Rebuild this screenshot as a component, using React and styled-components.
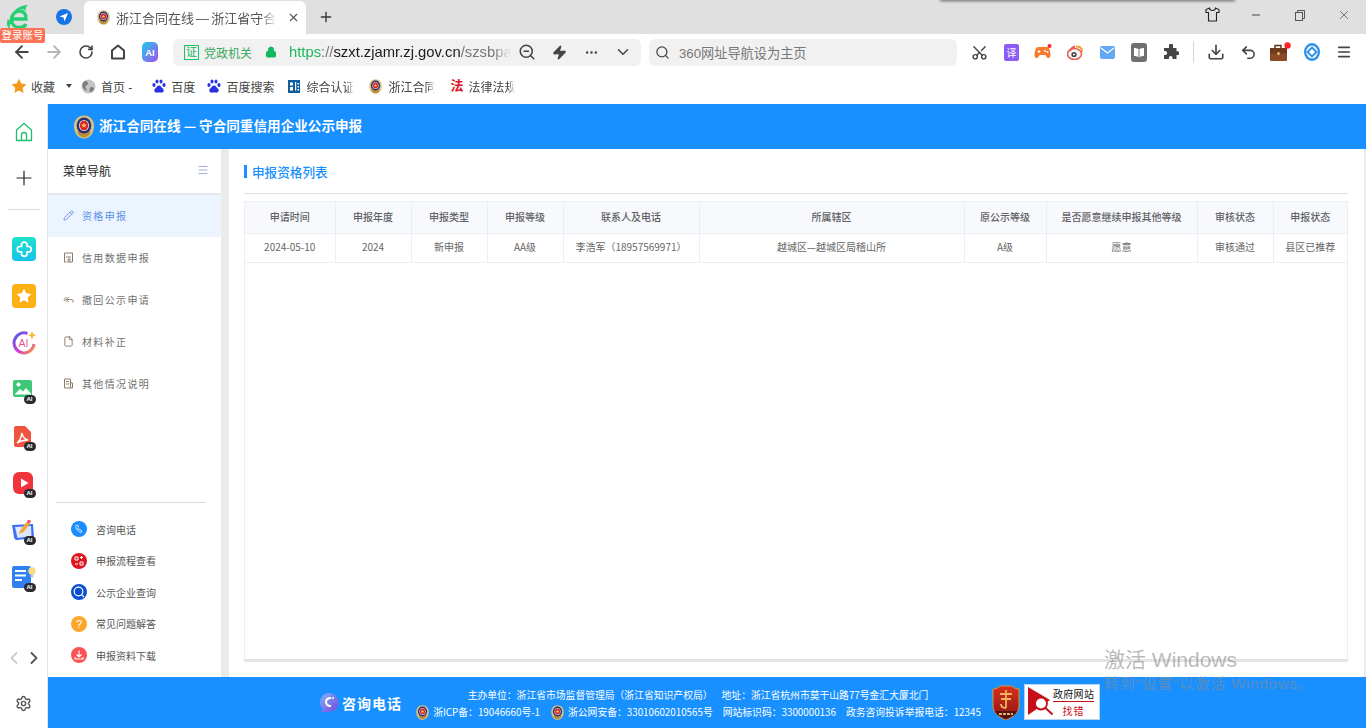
import React from 'react';
import styled, { createGlobalStyle } from 'styled-components';
import {
  ArrowLeft, ArrowRight, RotateCw, Search, Zap, MoreHorizontal, ChevronDown, X, Plus, Minus,
  Scissors, Download, Undo2, Menu, Settings, ChevronLeft, ChevronRight, Lock, Pencil, File,
  ZoomOut, ReplyAll,
} from 'lucide-react';

const blue = '#1890ff';
const cjk = '"Noto Sans CJK SC", "Noto Sans", sans-serif';

const GlobalStyle = createGlobalStyle`
  html, body { margin: 0; padding: 0; background: #fff; overflow: hidden; }
  * { box-sizing: border-box; }
  body { font-family: "Liberation Sans", ${cjk}; }
`;

const Page = styled.div`
  position: relative;
  width: 1366px;
  height: 728px;
  display: flex;
  flex-direction: column;
  overflow: hidden;
`;

/* browser chrome */
const TabStrip = styled.div`
  position: relative;
  height: 34px;
  background: #e0e0e0;
  display: flex;
  align-items: flex-end;
`;

const TabBrand = styled.div`
  width: 84px;
  height: 34px;
  display: flex;
  align-items: center;
  padding-left: 6px;
  gap: 24px;
`;

const LoginBadge = styled.span`
  position: absolute;
  left: 0;
  top: 28px;
  width: 45px;
  height: 15px;
  background: #fb7355;
  border-radius: 2px;
  color: #fff;
  font-size: 10.5px;
  line-height: 14px;
  text-align: center;
  white-space: nowrap;
  z-index: 3;
`;

const ActiveTab = styled.div`
  width: 222px;
  height: 33px;
  background: #fff;
  border-radius: 6px 6px 0 0;
  display: flex;
  align-items: center;
  padding-left: 12px;
  gap: 5px;
  color: #555;
  font-size: 13px;
  word-spacing: -1.5px;
`;

const FadeText = styled.span`
  width: ${({ w }) => w}px;
  overflow: hidden;
  white-space: nowrap;
  flex-shrink: 0;
  -webkit-mask-image: linear-gradient(to right, #000 ${({ from }) => from || 85}%, transparent);
  mask-image: linear-gradient(to right, #000 ${({ from }) => from || 85}%, transparent);
`;

const NewTab = styled.div`
  width: 40px;
  height: 34px;
  display: flex;
  align-items: center;
  justify-content: center;
  color: #333;
`;

const WindowButtons = styled.div`
  margin-left: auto;
  height: 29px;
  align-self: flex-start;
  display: flex;
  align-items: center;
`;

const WinButton = styled.div`
  width: 44px;
  display: flex;
  justify-content: center;
  color: #444;
`;

const TopShadow = styled.div`
  position: absolute;
  left: 940px;
  top: -2px;
  width: 295px;
  height: 2px;
  box-shadow: 0 1px 3px rgba(0, 0, 0, 0.65);
`;

const Toolbar = styled.div`
  height: 36px;
  background: #fff;
  display: flex;
  align-items: center;
  padding-left: 6px;
`;

const Slot = styled.div`
  width: ${({ w }) => w || 32}px;
  height: 28px;
  flex-shrink: 0;
  display: flex;
  align-items: center;
  justify-content: center;
  color: ${({ dim }) => (dim ? '#b4b4b4' : '#444')};
`;

const AddressBar = styled.div`
  width: 468px;
  height: 27px;
  margin-left: 7px;
  background: #f1f1f1;
  border-radius: 6px;
  display: flex;
  align-items: center;
  padding-left: 11px;
`;

const CertMark = styled.span`
  width: 15px;
  height: 15px;
  border: 1px solid #19c26b;
  color: #19b562;
  font-size: 11px;
  line-height: 12px;
  text-align: center;
`;

const CertText = styled.span`
  margin-left: 5px;
  width: 49px;
  color: #3aa860;
  font-size: 12px;
  white-space: nowrap;
`;

const LockWrap = styled.span`
  width: 36px;
  display: flex;
  justify-content: center;
  color: #12b85c;
`;

const Url = styled(FadeText)`
  font-size: 14.8px;
  color: #1b1b1b;
  b { font-weight: 400; color: #1fb760; }
  i { font-style: normal; color: #777; }
`;

const SearchBar = styled.div`
  width: 308px;
  height: 27px;
  margin: 0 6px 0 8px;
  background: #f1f1f1;
  border-radius: 6px;
  display: flex;
  align-items: center;
  gap: 9px;
  padding-left: 5px;
  color: #777;
  font-size: 13.2px;
`;

const SlotDivider = styled.span`
  width: 1px;
  height: 22px;
  margin: 0 6px;
  background: #d8d8d8;
  flex-shrink: 0;
`;

const Bookmarks = styled.div`
  height: 34px;
  background: #fff;
  display: flex;
  align-items: center;
  padding: 0 0 2px 11px;
  font-size: 12px;
  color: #444;
`;

const Mark = styled.span`
  display: flex;
  align-items: center;
  gap: ${({ gap }) => gap ?? 4}px;
  margin-left: ${({ ml }) => ml || 0}px;
  white-space: nowrap;
`;

const Caret = styled.span`
  width: 0;
  height: 0;
  margin-left: 11px;
  border: 3.5px solid transparent;
  border-top: 4px solid #444;
  border-bottom: 0;
`;

const LawGlyph = styled.span`
  width: 12px;
  color: #d8121f;
  font-size: 13px;
  font-weight: 700;
  line-height: 14px;
  text-align: center;
`;

/* site */
const Body = styled.div`
  flex: 1;
  min-height: 0;
  display: flex;
`;

const Rail = styled.nav`
  width: 48px;
  flex-shrink: 0;
  border-right: 1px solid #e4e4e4;
  display: flex;
  flex-direction: column;
  align-items: center;
  padding-top: 18px;
`;

const RailRule = styled.span`
  width: 32px;
  height: 1px;
  background: #dcdcdc;
  margin: 19px 0 27px;
`;

const RailApps = styled.div`
  display: flex;
  flex-direction: column;
  gap: 23px;
`;

const RailApp = styled.div`
  position: relative;
  width: 24px;
  height: 24px;
`;

const AiTag = styled.span`
  position: absolute;
  right: 0;
  bottom: -2px;
  width: 12px;
  height: 9px;
  border-radius: 5px;
  background: #2a2a2e;
  color: #fff;
  font-size: 6px;
  font-weight: 700;
  line-height: 9px;
  text-align: center;
`;

const RailArrows = styled.div`
  margin-top: 58px;
  display: flex;
  gap: 0;
`;

const RailBottom = styled.div`
  margin-top: 27px;
  color: #555;
  display: flex;
`;

const Site = styled.div`
  flex: 1;
  min-width: 0;
  display: flex;
  flex-direction: column;
`;

const SiteHeader = styled.header`
  height: 45px;
  flex-shrink: 0;
  background: ${blue};
  display: flex;
  align-items: center;
  padding: 0 0 0 24px;
  gap: 3px;
  color: #fff;
  font-size: 13.6px;
  font-weight: 700;
  font-family: ${cjk};
`;

const SiteTitle = styled.span`
  padding-bottom: 4px;
`;

const SiteMain = styled.div`
  flex: 1;
  min-height: 0;
  display: flex;
  background: #ebebeb;
  padding-right: 2px;
`;

const Sidebar = styled.aside`
  width: 173px;
  flex-shrink: 0;
  background: #fff;
  margin-right: 8px;
  display: flex;
  flex-direction: column;
  font-family: ${cjk};
`;

const SideTitle = styled.div`
  height: 46px;
  flex-shrink: 0;
  border-bottom: 2px solid #e3e8ee;
  display: flex;
  align-items: center;
  justify-content: space-between;
  padding: 0 12px 2px 15px;
  font-size: 12px;
  color: #222;
`;

const SideItem = styled.div`
  height: 42px;
  display: flex;
  align-items: center;
  gap: 8px;
  padding: 0 0 1px 15px;
  font-size: 10px;
  letter-spacing: 1.35px;
  background: ${({ active }) => (active ? '#ecf4ff' : 'transparent')};
  color: ${({ active }) => (active ? '#5a92e8' : '#707070')};
`;

const SideLinks = styled.div`
  margin: auto 15px 0 8px;
  padding: 11px 0 6px;
  border-top: 1px solid #dcdcdc;
`;

const SideLink = styled.div`
  height: 31.5px;
  display: flex;
  align-items: center;
  gap: 9px;
  padding-left: 15px;
  font-size: 10px;
  color: #555;
`;

const Content = styled.main`
  flex: 1;
  min-width: 0;
  background: #fff;
  padding: 0 16px 15px 15px;
  display: flex;
  flex-direction: column;
  font-family: ${cjk};
`;

const ListTitle = styled.h2`
  height: 45px;
  flex-shrink: 0;
  margin: 0 0 7px;
  border-bottom: 1px solid #dfdfdf;
  display: flex;
  align-items: center;
  gap: 5px;
  color: ${blue};
  font-size: 12.6px;
  font-weight: 500;
  &:before {
    content: '';
    width: 3px;
    height: 13px;
    background: ${blue};
  }
`;

const TableBox = styled.div`
  flex: 1;
  min-height: 0;
  border: 1px solid #ebeef5;
  border-bottom: 3px solid #e4e4e4;
`;

const Table = styled.table`
  width: 100%;
  table-layout: fixed;
  border-collapse: collapse;
  font-size: 10px;
  text-align: center;
`;

const Th = styled.th`
  height: 31px;
  padding: 0 0 2px;
  background: #f8f9fc;
  border: 1px solid #ebeef5;
  border-top: 0;
  color: #606266;
  font-weight: 500;
  &:first-child { border-left: 0; }
  &:last-child { border-right: 0; }
`;

const Td = styled.td`
  height: 29px;
  padding: 0 0 2px;
  border: 1px solid #ebeef5;
  color: #666;
  &:first-child { border-left: 0; }
  &:last-child { border-right: 0; }
`;

const SiteFooter = styled.footer`
  height: 51px;
  flex-shrink: 0;
  background: ${blue};
  display: flex;
  align-items: center;
  padding-left: 271px;
  color: #fff;
  font-size: 9.8px;
  font-family: ${cjk};
`;

const Consult = styled.div`
  width: 97px;
  flex-shrink: 0;
  display: flex;
  align-items: center;
  gap: 3px;
  font-size: 14px;
  font-weight: 700;
  letter-spacing: 1px;
`;

const FootLines = styled.div`
  width: 564px;
  flex-shrink: 0;
  display: flex;
  flex-direction: column;
  align-items: center;
  gap: 2px;
  margin-top: 2px;
`;

const FootLine = styled.div`
  height: 15px;
  display: flex;
  align-items: center;
  gap: ${({ gap }) => gap || 0}px;
  white-space: nowrap;
`;

const FootItem = styled.span`
  display: flex;
  align-items: center;
  gap: 3px;
`;

const TaxBadge = styled.div`
  margin-left: 11px;
  width: 30px;
  height: 37px;
  flex-shrink: 0;
`;

const ErrorBox = styled.div`
  width: 76px;
  height: 36px;
  margin: 0 0 2px 3px;
  flex-shrink: 0;
  background: #fff;
  border: 1px solid #b5d5f5;
  display: flex;
  align-items: center;
  padding-left: 3px;
  color: #111;
`;

const ErrorText = styled.div`
  display: flex;
  flex-direction: column;
  align-items: center;
  font-size: 10px;
  line-height: 13px;
  span { padding-bottom: 1px; border-bottom: 1px solid #c8101a; letter-spacing: 0.3px; white-space: nowrap; }
  em { font-style: normal; color: #c8101a; letter-spacing: 1px; margin-top: 2px; }
`;

const Watermark = styled.div`
  position: absolute;
  left: 1104px;
  top: 647px;
  color: rgba(140, 140, 140, 0.6);
  white-space: nowrap;
  pointer-events: none;
  font-family: "Liberation Sans", ${cjk};
  h4 { margin: 0; font-weight: 400; font-size: 21px; line-height: 25px; }
  p { margin: 0; font-size: 15px; line-height: 23px; letter-spacing: 0.8px; }
`;

const Emblem = ({ size = 18 }) => (
  <svg width={size} height={size} viewBox="0 0 24 24" style={{ flexShrink: 0 }}>
    <path d="M12 .5c6 0 10 4.500 10 10.500 0 7-4 12.500-10 12.500S2 18 2 11C2 5 6 .5 12 .5z" fill="#d8c184" />
    <path d="M5 17c2 4 4.500 5.500 7 5.500s5-1.500 7-5.500l-7-3z" fill="#b98f3c" />
    <ellipse cx="12" cy="10.500" rx="7.300" ry="8" fill="#2a2f74" />
    <ellipse cx="12" cy="10.500" rx="5" ry="5.600" fill="#e9e3d2" />
    <ellipse cx="12" cy="10.500" rx="4.200" ry="4.800" fill="#d8232a" />
    <path d="M12 7.500l.9 2h2l-1.600 1.300.6 2-1.900-1.200-1.900 1.200.6-2L9.100 9.500h2z" fill="#f6cf57" />
  </svg>
);

const Paw = () => (
  <svg width="14" height="15" viewBox="0 0 14 15" fill="#2932e1">
    <ellipse cx="2" cy="6" rx="1.600" ry="2" />
    <ellipse cx="5" cy="2.600" rx="1.500" ry="2" />
    <ellipse cx="9" cy="2.600" rx="1.500" ry="2" />
    <ellipse cx="12" cy="6" rx="1.600" ry="2" />
    <path d="M7 6.500c-2 0-2.400 2-4 3.200C1.500 11 2.500 14 5 13.600c1.500-.2 2.500-.2 4 0 2.500.4 3.500-2.600 2-3.900C9.400 8.500 9 6.500 7 6.500z" />
  </svg>
);

const GovBox = () => (
  <svg width="12" height="13" viewBox="0 0 12 13">
    <rect width="12" height="13" fill="#0f5f9e" />
    <path d="M2 2.500h3v3H2zM2 7h3v3.500H2zM7 2h1.200v8.500H7zM9.500 3H11v1.500H9.500zM9.500 6H11v1.500H9.500zM9.500 9H11v1.500H9.500z" fill="#fff" />
  </svg>
);

const Globe = () => (
  <svg width="15" height="15" viewBox="0 0 15 15">
    <circle cx="7.500" cy="7.500" r="7" fill="#c4c4c4" />
    <path d="M4 2c2 0 3 1 3 2.500S5 6 4.500 7.500 6 10 6 12c-2-.5-4-2.500-4.500-4.500S2.500 2.500 4 2zM10 8c1.500 0 3 .5 3 1.500S11 13 9.500 13 8.500 8 10 8z" fill="#7d7d7d" />
  </svg>
);

const Star = () => (
  <svg width="16" height="16" viewBox="0 0 16 16" fill="#f59a1c">
    <path d="M8 .8l2.300 4.800 5.200.7-3.800 3.600.9 5.200L8 12.600 3.400 15.100l.9-5.200L.5 6.300l5.200-.7z" />
  </svg>
);

const BrowserLogo = () => (
  <svg width="26" height="27" viewBox="0 0 26 27">
    <path d="M6 15h14c.5-5-2.500-8-6.500-8S5.500 10.500 5.500 15.500s3.500 8 8 8c3 0 5.500-1.200 6.500-3.500" fill="none" stroke="#22cf72" strokeWidth="3.400" />
    <path d="M7 9C11 3 17 1 22 1c-2 1-3 3-2 6-3-3-8-2-13 2zM2 15c-2 4-1 8 2 10-1-3 0-5 2-6z" fill="#22cf72" />
  </svg>
);

const Compass = () => (
  <svg width="16" height="16" viewBox="0 0 16 16">
    <circle cx="8" cy="8" r="8" fill="#1673e6" />
    <path d="M12 4L8.600 12.500 7.500 8.500 3.500 7.400z" fill="#fff" />
  </svg>
);

const Shirt = () => (
  <svg width="15" height="15" viewBox="0 0 15 15" fill="none" stroke="#222" strokeWidth="1.100">
    <path d="M4.500 1L1 2.500v3h2.500V14h8V5.500H14v-3L10.500 1c0 1.500-1.300 2.500-3 2.500S4.500 2.500 4.500 1z" />
  </svg>
);

const Restore = () => (
  <svg width="12" height="12" viewBox="0 0 12 12" fill="none" stroke="#555">
    <rect x="1.500" y="3.500" width="7" height="8" />
    <path d="M3.500 3V1.500h7v8H9" />
  </svg>
);

const HomeOutline = ({ color = '#444', size = 16, width = 2 }) => (
  <svg width={size} height={size} viewBox="0 0 16 16" fill="none" stroke={color} strokeWidth={width} strokeLinejoin="round">
    <path d="M8 1.500L2 6.500v8h12v-8z" />
  </svg>
);

const RailHome = () => (
  <svg width="20" height="20" viewBox="0 0 20 20" fill="none" stroke="#1fbf6f" strokeWidth="1.300" strokeLinejoin="round">
    <path d="M10 1.500L2.500 8v10.500h15V8z" />
    <path d="M7.500 18.500V13a2.500 2.500 0 0 1 5 0v5.500" />
  </svg>
);

const AiChip = () => (
  <svg width="16" height="20" viewBox="0 0 16 20">
    <defs>
      <linearGradient id="aichip" x1="0" y1="0" x2="1" y2="1">
        <stop offset="0" stopColor="#19cdf2" />
        <stop offset="1" stopColor="#a94ce8" />
      </linearGradient>
    </defs>
    <rect width="16" height="20" rx="5" fill="url(#aichip)" />
    <text x="8" y="14" fontSize="9.500" fontWeight="700" fill="#fff" textAnchor="middle" fontFamily="Liberation Sans">AI</text>
  </svg>
);

const TranslateIcon = () => (
  <svg width="15" height="17" viewBox="0 0 15 17">
    <rect width="15" height="17" rx="2" fill="#8b5cf6" />
    <text x="7.500" y="12.500" fontSize="10" fill="#fff" textAnchor="middle" fontFamily={cjk}>译</text>
  </svg>
);

const GameIcon = () => (
  <svg width="18" height="16" viewBox="0 0 18 16">
    <path d="M4 3h9c2 0 3 3 3.500 7 .3 2.500-1 4.500-2.500 4-1.500-.5-2-2.500-3-3H6c-1 .5-1.500 2.500-3 3-1.500.5-2.800-1.500-2.500-4C1 6 2 3 4 3z" fill="#f97a2a" />
    <path d="M5 6v3M3.500 7.500h3" stroke="#fff" />
    <circle cx="11" cy="7" r="1" fill="#fff" />
    <circle cx="13.500" cy="8" r="1" fill="#fff" />
    <circle cx="15.500" cy="2" r="2" fill="#f22" />
  </svg>
);

const WeiboIcon = () => (
  <svg width="17" height="16" viewBox="0 0 17 16">
    <ellipse cx="7.500" cy="10" rx="7" ry="5.500" fill="#f2f2f2" stroke="#ea5d4a" strokeWidth="1.500" />
    <circle cx="7" cy="10.500" r="2.600" fill="#444" />
    <circle cx="7" cy="10.500" r="1" fill="#fff" />
    <path d="M9 3c3-1.500 6.500 1 6 5" fill="none" stroke="#f29c2c" strokeWidth="1.800" />
    <path d="M3 7c1-2.500 3-4 5-4.500" fill="none" stroke="#ea5d4a" strokeWidth="2" />
  </svg>
);

const MailIcon = () => (
  <svg width="15" height="13" viewBox="0 0 15 13">
    <rect width="15" height="13" rx="2" fill="#63a8f5" />
    <path d="M1 2l6.500 5L14 2" fill="none" stroke="#fff" strokeWidth="1.300" />
  </svg>
);

const BookIcon = () => (
  <svg width="16" height="19" viewBox="0 0 16 19">
    <rect width="16" height="19" rx="3" fill="#707070" />
    <path d="M3 5c2 0 4 .5 5 1.500C9 5.500 11 5 13 5v8c-2 0-4 .5-5 1.500C7 13.500 5 13 3 13z" fill="#fff" />
    <path d="M8 6.500v8" stroke="#707070" />
  </svg>
);

const PuzzleIcon = () => (
  <svg width="16" height="16" viewBox="0 0 16 16" fill="#444">
    <path d="M6 1.500a2 2 0 0 1 4 0V4h3.500v3.200h1a1.900 1.900 0 0 1 0 3.800h-1V15H9.500v-1.200a1.800 1.800 0 0 0-3.600 0V15H1v-4h1.200a2 2 0 0 0 0-4H1V4h5z" />
  </svg>
);

const CaseIcon = () => (
  <svg width="22" height="20" viewBox="0 0 22 20">
    <path d="M6 6V3.500h6V6" fill="none" stroke="#5a3420" strokeWidth="1.500" />
    <rect x="1" y="6" width="17" height="13" rx="1" fill="#8a4a26" />
    <rect x="1" y="6" width="17" height="5.500" fill="#6e3a1d" />
    <rect x="8.500" y="10" width="2" height="3" fill="#f3c661" />
    <circle cx="18.500" cy="3.500" r="3.200" fill="#f22" />
  </svg>
);

const SwirlIcon = () => (
  <svg width="16" height="18" viewBox="0 0 16 18">
    <ellipse cx="8" cy="9" rx="8" ry="9" fill="#2a8fe6" />
    <ellipse cx="8" cy="9" rx="5.700" ry="6.500" fill="#fff" />
    <path d="M8 4.500L12.500 9 8 13.500 3.500 9z" fill="none" stroke="#2a8fe6" strokeWidth="1.800" />
  </svg>
);

const AppPlus = () => (
  <svg width="24" height="24" viewBox="0 0 24 24">
    <defs>
      <linearGradient id="appplus" x1="0" y1="0" x2="0" y2="1">
        <stop offset="0" stopColor="#1fe2c8" />
        <stop offset="1" stopColor="#15c2ee" />
      </linearGradient>
    </defs>
    <rect width="24" height="24" rx="4" fill="url(#appplus)" />
    <path d="M9.500 9.500V8a2.800 2.800 0 0 1 5.600 0v1.500h1.500a2.700 2.700 0 0 1 0 5.400h-1.500V16.500a2.800 2.800 0 0 1-5.600 0v-1.600H8a2.700 2.700 0 0 1 0-5.400z" fill="none" stroke="#fff" strokeWidth="1.700" />
  </svg>
);

const AppStar = () => (
  <svg width="24" height="24" viewBox="0 0 24 24">
    <rect width="24" height="24" rx="4" fill="#fdb014" />
    <path d="M12 4.500l2.300 4.800 5.200.7-3.800 3.600.9 5.200-4.600-2.500-4.600 2.500.9-5.200L4.500 10l5.200-.7z" fill="#fff" />
  </svg>
);

const AppRing = () => (
  <svg width="24" height="24" viewBox="0 0 24 24">
    <defs>
      <linearGradient id="appring" x1="0" y1="0" x2="1" y2="1">
        <stop offset="0" stopColor="#4a5cf0" />
        <stop offset="0.6" stopColor="#d43fd0" />
        <stop offset="1" stopColor="#f7a22c" />
      </linearGradient>
    </defs>
    <path d="M15.500 2.500A10 10 0 1 0 22 13" fill="none" stroke="url(#appring)" strokeWidth="3" />
    <text x="11.500" y="16" fontSize="10.500" fill="#e8558f" textAnchor="middle" fontFamily="Liberation Sans">AI</text>
    <path d="M20 0l1.200 3 2.800 1.200-2.800 1.200L20 8.500l-1.200-3.100L16 4.200 18.800 3z" fill="#f9b93b" />
  </svg>
);

const AppImage = () => (
  <svg width="24" height="24" viewBox="0 0 24 24">
    <rect x="1" y="2" width="19" height="17" rx="2" fill="#3ec777" />
    <circle cx="6.500" cy="6.500" r="2" fill="#fff" />
    <path d="M3 16l5-5 3 2.500L14 10l5 5.500v1H3z" fill="#fff" />
  </svg>
);

const AppPdf = () => (
  <svg width="24" height="24" viewBox="0 0 24 24">
    <path d="M2 3a2 2 0 0 1 2-2h9l6 6v13a2 2 0 0 1-2 2H4a2 2 0 0 1-2-2z" fill="#f0533f" />
    <path d="M5 18c2-1 4-5 5-10 .5 4 3 6 6 7-3 0-7 .5-11 3z" fill="none" stroke="#fff" strokeWidth="1.400" />
  </svg>
);

const AppVideo = () => (
  <svg width="24" height="24" viewBox="0 0 24 24">
    <rect x="1" y="0" width="20" height="22" rx="6" fill="#f0333c" />
    <path d="M9 6.500l7.500 4.500L9 15.500z" fill="#fff" />
  </svg>
);

const AppNote = () => (
  <svg width="24" height="24" viewBox="0 0 24 24">
    <path d="M0 6l21-1 1 14-17 2c-2 0-3-2-3-3z" fill="#3d6ff0" />
    <path d="M3 8l16-1 .5 10-14 2z" fill="#dbe6ff" />
    <path d="M7 15l1.500-4L15 2.500l3 2.200-6.500 8.300z" fill="#f4a62f" />
    <circle cx="17" cy="2.500" r="1.800" fill="#e9526b" />
  </svg>
);

const AppDoc = () => (
  <svg width="24" height="24" viewBox="0 0 24 24">
    <rect x="0" y="0" width="19" height="22" rx="2" fill="#2f80f0" />
    <path d="M3 5h11M3 9.500h11M3 14h7" stroke="#fff" strokeWidth="1.800" />
    <circle cx="20" cy="5" r="3.700" fill="#fbdc7c" />
    <rect x="18.500" y="8.500" width="3" height="3" fill="#bfc8d4" />
  </svg>
);

const SideDoc = ({ kind }) => (
  <svg width="11" height="11" viewBox="0 0 11 11" fill="none" stroke="#8a7a6a" strokeWidth="1" style={{ flexShrink: 0 }}>
    {kind === 'data' ? (
      <path d="M1.500 1h8v9h-2M3.500 10h-2V1M3 5h5M5 7v3.500l1-1 1 1V7z" />
    ) : (
      <path d="M1.500 1h6v9h-6zM7.500 5h2v5h-2M3 3.500h3M3 6h3" />
    )}
  </svg>
);

const LinkIcon = ({ bg, children }) => (
  <svg width="16" height="16" viewBox="0 0 16 16" style={{ flexShrink: 0 }}>
    <circle cx="8" cy="8" r="8" fill={bg} />
    {children}
  </svg>
);

const ConsultLogo = () => (
  <svg width="20" height="22" viewBox="0 0 20 22">
    <defs>
      <linearGradient id="consultlogo" x1="0" y1="0" x2="1" y2="1">
        <stop offset="0" stopColor="#7ab6ff" />
        <stop offset="1" stopColor="#7a43d6" />
      </linearGradient>
    </defs>
    <path d="M10 1a9.500 9.500 0 0 1 0 19H2l1.500-3A9.500 9.500 0 0 1 10 1z" fill="url(#consultlogo)" />
    <path d="M12 6c-3.500 0-5 2-5 4 0 2.500 2 4 5 4" fill="none" stroke="#fff" strokeWidth="2" />
    <circle cx="14" cy="6" r="1" fill="#fff" />
  </svg>
);

const TaxShield = () => (
  <svg width="30" height="37" viewBox="0 0 30 37">
    <defs>
      <linearGradient id="taxshield" x1="0" y1="0" x2="0" y2="1">
        <stop offset="0" stopColor="#d8301c" />
        <stop offset="1" stopColor="#8c1414" />
      </linearGradient>
    </defs>
    <path d="M2 5c3 0 5-1 7-3h12c2 2 4 3 7 3v17c0 7-6 11-13 14C8 33 2 29 2 22z" fill="url(#taxshield)" stroke="#d79a3c" />
    <path d="M15 6v18M9 10h12M10 15h10M15 24c-3 0-5-1-5-4" fill="none" stroke="#eeb45a" strokeWidth="1.800" />
    <path d="M3.500 27h23l-3 4-8.500 4.500L6.500 31z" fill="#5a1010" />
    <path d="M8 30h14" stroke="#d8b070" strokeWidth="2" strokeDasharray="3 1" />
  </svg>
);

const ErrorFlag = () => (
  <svg width="25" height="29" viewBox="0 0 25 29" style={{ flexShrink: 0 }}>
    <path d="M0 0l22 13L0 28z" fill="#c8101a" />
    <circle cx="13" cy="16.500" r="6" fill="#fff" stroke="#c8101a" strokeWidth="1.800" />
    <path d="M17.500 21l7 6.500" stroke="#c8101a" strokeWidth="2" />
  </svg>
);

const COLUMNS = [
  ['申请时间', 90, '2024-05-10'],
  ['申报年度', 76, '2024'],
  ['申报类型', 76, '新申报'],
  ['申报等级', 76, 'AA级'],
  ['联系人及电话', 136, '李浩军（18957569971）'],
  ['所属辖区', 265, '越城区—越城区局稽山所'],
  ['原公示等级', 82, 'A级'],
  ['是否愿意继续申报其他等级', 151, '愿意'],
  ['审核状态', 76, '审核通过'],
  ['申报状态', 74, '县区已推荐'],
];

const MENU = [
  ['资格申报', <Pencil key="a" size={11} color="#6f8fe8" style={{ flexShrink: 0 }} />],
  ['信用数据申报', <SideDoc key="b" kind="data" />],
  ['撤回公示申请', <ReplyAll key="c" size={11} color="#8a7a6a" style={{ flexShrink: 0 }} />],
  ['材料补正', <File key="d" size={11} color="#8a7a6a" style={{ flexShrink: 0 }} />],
  ['其他情况说明', <SideDoc key="e" />],
];

const App = () => (
  <Page>
    <GlobalStyle />
    <TabStrip>
      <TopShadow />
      <TabBrand>
        <BrowserLogo />
        <Compass />
      </TabBrand>
      <LoginBadge>登录账号</LoginBadge>
      <ActiveTab>
        <Emblem size={15} />
        <FadeText w={161} from={90}>浙江合同在线 — 浙江省守合同</FadeText>
        <X size={13} color="#555" style={{ marginLeft: 5 }} />
      </ActiveTab>
      <NewTab><Plus size={16} strokeWidth={2} /></NewTab>
      <WindowButtons>
        <WinButton><Shirt /></WinButton>
        <WinButton><Minus size={12} /></WinButton>
        <WinButton><Restore /></WinButton>
        <WinButton><X size={14} strokeWidth={1.2} /></WinButton>
      </WindowButtons>
    </TabStrip>

    <Toolbar>
      <Slot><ArrowLeft size={20} strokeWidth={2.2} /></Slot>
      <Slot dim><ArrowRight size={20} strokeWidth={2.2} /></Slot>
      <Slot><RotateCw size={16} strokeWidth={2.4} /></Slot>
      <Slot><HomeOutline /></Slot>
      <Slot><AiChip /></Slot>
      <AddressBar>
        <CertMark>证</CertMark>
        <CertText>党政机关</CertText>
        <LockWrap><Lock size={12} fill="#12b85c" /></LockWrap>
        <Url w={222} from={92}><b>https</b><i>://</i>szxt.zjamr.zj.gov.cn<i>/szsbpa</i></Url>
        <Slot><ZoomOut size={18} /></Slot>
        <Slot><Zap size={15} fill="#444" /></Slot>
        <Slot><MoreHorizontal size={15} /></Slot>
        <Slot><ChevronDown size={18} /></Slot>
      </AddressBar>
      <SearchBar>
        <Slot w={16}><Search size={15} /></Slot>
        360网址导航设为主页
      </SearchBar>
      <Slot><Scissors size={17} style={{ transform: 'rotate(-90deg)' }} /></Slot>
      <Slot><TranslateIcon /></Slot>
      <Slot><GameIcon /></Slot>
      <Slot><WeiboIcon /></Slot>
      <Slot><MailIcon /></Slot>
      <Slot><BookIcon /></Slot>
      <Slot><PuzzleIcon /></Slot>
      <SlotDivider />
      <Slot><Download size={18} strokeWidth={2.2} /></Slot>
      <Slot><Undo2 size={17} strokeWidth={2.2} /></Slot>
      <Slot><CaseIcon /></Slot>
      <Slot><SwirlIcon /></Slot>
      <Slot><Menu size={16} strokeWidth={2.4} /></Slot>
    </Toolbar>

    <Bookmarks>
      <Mark><Star />收藏</Mark>
      <Caret />
      <Mark ml={9} gap={5}><Globe />首页 -</Mark>
      <Mark ml={20} gap={5}><Paw />百度</Mark>
      <Mark ml={12} gap={5}><Paw />百度搜索</Mark>
      <Mark ml={14} gap={6}><GovBox /><FadeText w={48}>综合认证</FadeText></Mark>
      <Mark ml={14} gap={5}><Emblem size={15} /><FadeText w={47}>浙江合同</FadeText></Mark>
      <Mark ml={15} gap={6}><LawGlyph>法</LawGlyph><FadeText w={47}>法律法规</FadeText></Mark>
    </Bookmarks>

    <Body>
      <Rail>
        <RailHome />
        <Plus size={24} color="#222" strokeWidth={1.2} style={{ marginTop: 24 }} />
        <RailRule />
        <RailApps>
          <RailApp><AppPlus /></RailApp>
          <RailApp><AppStar /></RailApp>
          <RailApp><AppRing /></RailApp>
          <RailApp><AppImage /><AiTag>AI</AiTag></RailApp>
          <RailApp><AppPdf /><AiTag>AI</AiTag></RailApp>
          <RailApp><AppVideo /><AiTag>AI</AiTag></RailApp>
          <RailApp><AppNote /><AiTag>AI</AiTag></RailApp>
          <RailApp><AppDoc /><AiTag>AI</AiTag></RailApp>
        </RailApps>
        <RailArrows>
          <ChevronLeft size={20} color="#ccc" strokeWidth={2.2} />
          <ChevronRight size={20} color="#555" strokeWidth={2.2} />
        </RailArrows>
        <RailBottom><Settings size={17} /></RailBottom>
      </Rail>

      <Site>
        <SiteHeader>
          <Emblem size={24} />
          <SiteTitle>浙江合同在线 — 守合同重信用企业公示申报</SiteTitle>
        </SiteHeader>
        <SiteMain>
          <Sidebar>
            <SideTitle>菜单导航<Menu size={12} color="#6f7fd8" strokeWidth={1.3} /></SideTitle>
            {MENU.map(([label, icon], i) => (
              <SideItem key={label} active={i === 0}>{icon}{label}</SideItem>
            ))}
            <SideLinks>
              <SideLink>
                <LinkIcon bg="#1a8cff">
                  <path d="M5 4.500c-1 1.500 1 6 5 7l1-1.500-2-1.500-1 .5c-.6-.5-1-1.500-1.200-2.300l.8-.7L6.500 4z" fill="none" stroke="#fff" strokeWidth="0.800" />
                </LinkIcon>
                咨询电话
              </SideLink>
              <SideLink>
                <LinkIcon bg="#dd1620">
                  <path d="M4 4h3v3H4zM9 4.500h3M10.500 3v3M4 11h3M9 9h3v3H9z" fill="none" stroke="#fff" />
                </LinkIcon>
                申报流程查看
              </SideLink>
              <SideLink>
                <LinkIcon bg="#0c4fd0">
                  <circle cx="7.500" cy="7.500" r="4.300" fill="none" stroke="#fff" strokeWidth="1.200" />
                  <path d="M10.800 10.800L13 13" stroke="#fff" strokeWidth="1.200" />
                </LinkIcon>
                公示企业查询
              </SideLink>
              <SideLink>
                <LinkIcon bg="#fba72a">
                  <text x="8" y="12" fontSize="11" fill="#fff" textAnchor="middle" fontFamily="Liberation Sans">?</text>
                </LinkIcon>
                常见问题解答
              </SideLink>
              <SideLink>
                <LinkIcon bg="#fa5252">
                  <path d="M8 3.500v6M5.500 7.500L8 10l2.500-2.500M4 10v2h8v-2" fill="none" stroke="#fff" strokeWidth="1.100" />
                </LinkIcon>
                申报资料下载
              </SideLink>
            </SideLinks>
          </Sidebar>

          <Content>
            <ListTitle>申报资格列表</ListTitle>
            <TableBox>
              <Table>
                <colgroup>
                  {COLUMNS.map(([title, width]) => <col key={title} style={{ width }} />)}
                </colgroup>
                <thead>
                  <tr>{COLUMNS.map(([title]) => <Th key={title}>{title}</Th>)}</tr>
                </thead>
                <tbody>
                  <tr>{COLUMNS.map(([title, , value]) => <Td key={title}>{value}</Td>)}</tr>
                </tbody>
              </Table>
            </TableBox>
          </Content>
        </SiteMain>
        <SiteFooter>
          <Consult><ConsultLogo />咨询电话</Consult>
          <FootLines>
            <FootLine gap={9}>
              <span>主办单位：浙江省市场监督管理局（浙江省知识产权局）</span>
              <span>地址：浙江省杭州市莫干山路77号金汇大厦北门</span>
            </FootLine>
            <FootLine gap={10}>
              <FootItem><Emblem size={15} />浙ICP备：19046660号-1</FootItem>
              <FootItem><Emblem size={15} />浙公网安备：33010602010565号</FootItem>
              <span>网站标识码：3300000136</span>
              <span>政务咨询投诉举报电话：12345</span>
            </FootLine>
          </FootLines>
          <TaxBadge><TaxShield /></TaxBadge>
          <ErrorBox>
            <ErrorFlag />
            <ErrorText><span>政府网站</span><em>找错</em></ErrorText>
          </ErrorBox>
        </SiteFooter>
      </Site>
    </Body>

    <Watermark>
      <h4>激活 Windows</h4>
      <p>转到“设置”以激活 Windows。</p>
    </Watermark>
  </Page>
);

export default App;
